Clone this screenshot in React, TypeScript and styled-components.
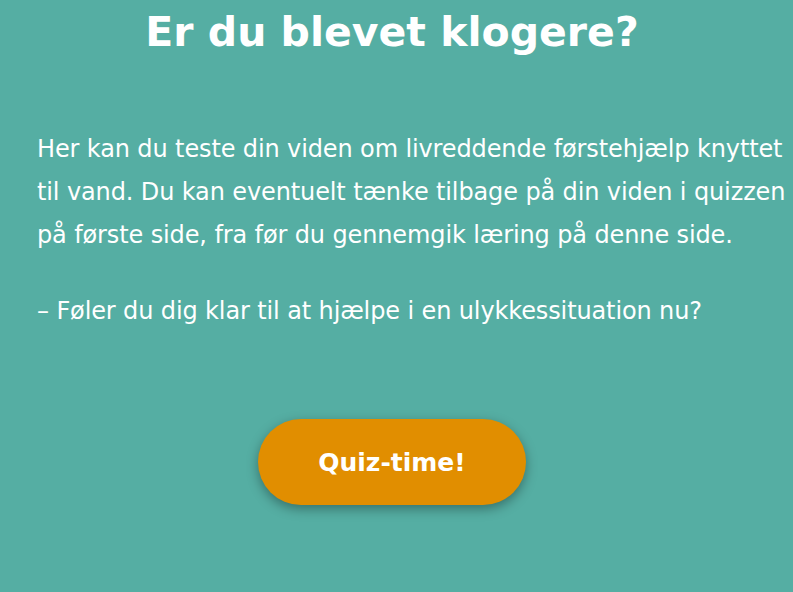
import React from "react";
import styled, { createGlobalStyle } from "styled-components";

const Global = createGlobalStyle`
  html, body { margin: 0; padding: 0; }
  body {
    background: #55aea3;
    font-family: "DejaVu Sans", "Open Sans", sans-serif;
    color: #ffffff;
    overflow: hidden;
  }
`;

const Page = styled.main`
  width: 784px;
  min-height: 592px;
  display: flex;
  flex-direction: column;
  align-items: center;
`;

const Title = styled.h1`
  margin: 6px 0 0;
  font-size: 41px;
  line-height: 52px;
  font-weight: 700;
  text-align: center;
`;

const Body = styled.section`
  align-self: flex-start;
  margin: 70px 0 0 37px;
  width: 760px;
`;

const Paragraph = styled.p<{ $gap?: number }>`
  margin: ${(p) => p.$gap ?? 0}px 0 0;
  font-size: 24px;
  line-height: 43px;
  font-weight: 400;
  letter-spacing: -0.12px;
`;

const Button = styled.button`
  margin-top: 86px;
  width: 268px;
  height: 86px;
  border: none;
  border-radius: 43px;
  background: #e18e00;
  color: #ffffff;
  font-family: inherit;
  font-size: 25px;
  font-weight: 700;
  box-shadow: 0 4px 12px rgba(0, 0, 0, 0.35);
  cursor: pointer;
`;

export default function App() {
  return (
    <>
      <Global />
      <Page>
        <Title>Er du blevet klogere?</Title>
        <Body>
          <Paragraph>
            Her kan du teste din viden om livreddende førstehjælp knyttet til vand. Du kan eventuelt tænke tilbage på din viden i quizzen på første side, fra før du gennemgik læring på denne side.
          </Paragraph>
          <Paragraph $gap={33}>– Føler du dig klar til at hjælpe i en ulykkessituation nu?</Paragraph>
        </Body>
        <Button>Quiz-time!</Button>
      </Page>
    </>
  );
}
